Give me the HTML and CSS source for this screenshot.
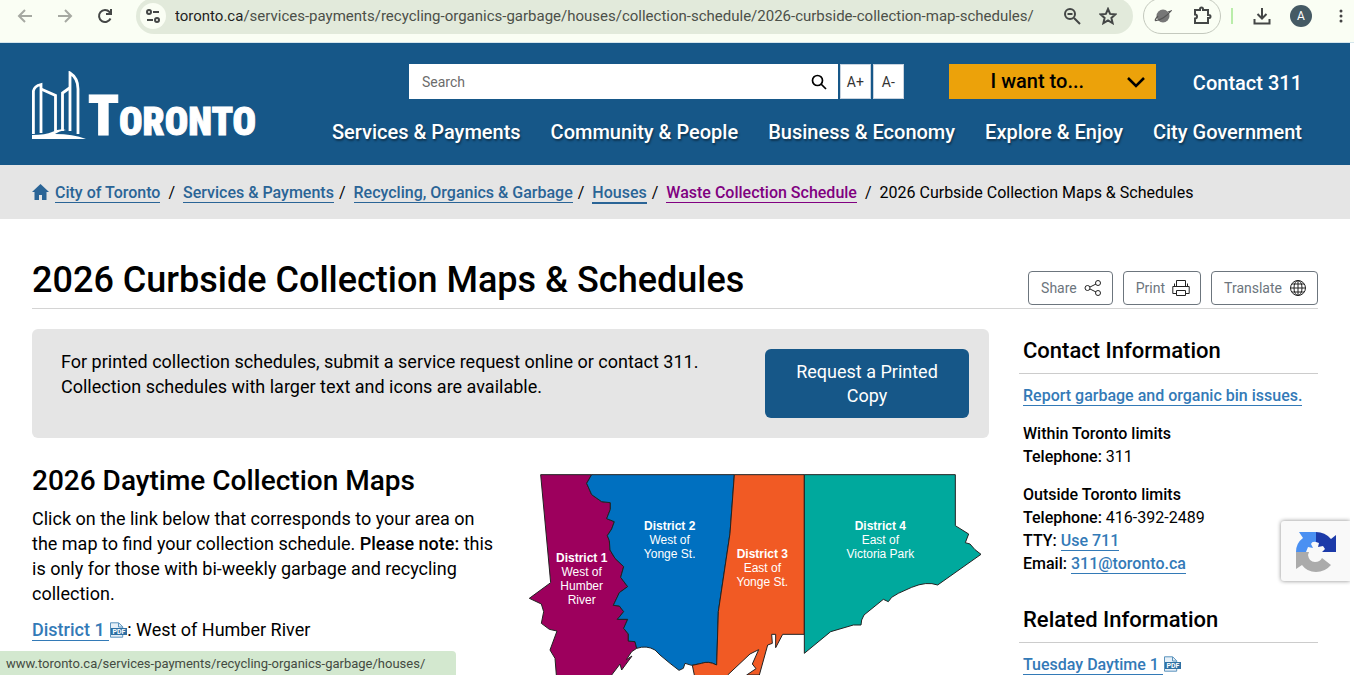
FILE: index.html
```
<!DOCTYPE html>
<html lang="en">
<head>
  <meta charset="UTF-8">
  <meta name="viewport" content="width=device-width, initial-scale=1">
  <title>2026 Curbside Collection Maps &amp; Schedules</title>
  <link rel="stylesheet" href="styles.css">
</head>
<body>
  <div class="browser-bar">
    <button class="bar-btn dim" aria-label="Back"><svg width="16" height="16" viewBox="0 0 16 16"><path d="M15 8H2M8 2L2 8l6 6"/></svg></button>
    <button class="bar-btn dim" aria-label="Forward"><svg width="16" height="16" viewBox="0 0 16 16"><path d="M1 8h13M8 2l6 6-6 6"/></svg></button>
    <button class="bar-btn" aria-label="Reload"><svg width="16" height="16" viewBox="0 0 16 16"><path d="M13.500 10.500A6 6 0 1 1 12.500 4L14 5.500M14 1v5H9"/></svg></button>
    <div class="address">
      <button class="site-info" aria-label="Site information"><svg width="16" height="16" viewBox="0 0 16 16"><circle cx="4" cy="4" r="2"/><path d="M8 4h6M2 12h6"/><circle cx="12" cy="12" r="2"/></svg></button>
      <span class="url"><b>toronto.ca</b>/services-payments/recycling-organics-garbage/houses/collection-schedule/2026-curbside-collection-map-schedules/</span>
      <button class="bar-btn" aria-label="Zoom"><svg width="18" height="18" viewBox="0 0 18 18"><circle cx="7" cy="7" r="5"/><path d="M11 11l6 6M4.500 7h5"/></svg></button>
      <button class="bar-btn" aria-label="Bookmark"><svg width="18" height="18" viewBox="0 0 18 18"><path d="M9 2l2.100 4.900 5.300.5-4 3.500 1.200 5.200L9 13.300l-4.600 2.800 1.200-5.200-4-3.500 5.300-.5z"/></svg></button>
    </div>
    <div class="extensions">
      <button class="bar-btn" aria-label="Extension"><svg width="18" height="18" viewBox="0 0 18 18"><circle cx="9" cy="9" r="6.500" fill="#777" stroke="none"/><path d="M1 13.500Q2 11 4 9M1 13.500C6 14 13 9 17 4L14 5" stroke="#555" stroke-width="1.200"/></svg></button>
      <button class="bar-btn" aria-label="Extensions"><svg width="20" height="20" viewBox="0 0 20 20"><path d="M3 4h5V3a1.500 1.500 0 0 1 3 0v1h5v5h1a1.500 1.500 0 0 1 0 3h-1v5H3v-4.500a2 2 0 0 0 0-4z"/></svg></button>
    </div>
    <span class="bar-divider"></span>
    <button class="bar-btn" aria-label="Downloads"><svg width="18" height="18" viewBox="0 0 18 18"><path d="M9 1v10M4.500 7L9 11.500 13.500 7M1.500 12v4.500h15V12"/></svg></button>
    <button class="avatar">A</button>
    <button class="bar-btn menu" aria-label="Menu"><svg width="4" height="16" viewBox="0 0 4 16"><g fill="#444" stroke="none"><circle cx="2" cy="3" r="1.500"/><circle cx="2" cy="8" r="1.500"/><circle cx="2" cy="13" r="1.500"/></g></svg></button>
  </div>

  <div class="page">
    <header class="header">
      <a class="logo" href="#" aria-label="Toronto">
        <svg width="54" height="69" viewBox="0 0 54 69">
          <g fill="none" stroke="#fff" stroke-width="2.800">
            <path d="M1.400 63V20q1-5 7.600-6.500V62"/>
            <path d="M9 18l14.500 6.500V60"/>
            <path d="M30.500 60V22l7-5"/>
            <path d="M38 60V2q8 5 8 16v45"/>
          </g>
          <path d="M0 64q14 0 20-3 8-4 14-2-7 1-11 4 18 0 31 5H0z" fill="#fff"/>
        </svg>
        <span class="wordmark">T<span>ORONTO</span></span>
      </a>
      <div class="header-main">
        <div class="tools">
          <form class="search">
            <input type="text" placeholder="Search" aria-label="Search">
            <button type="button" aria-label="Submit search"><svg width="16" height="16" viewBox="0 0 16 16"><circle cx="6.500" cy="6.500" r="5"/><path d="M10 10l5 5"/></svg></button>
          </form>
          <button class="text-size">A+</button>
          <button class="text-size">A-</button>
          <button class="want"><span>I want to...</span><svg width="20" height="12" viewBox="0 0 20 12"><path d="M2 2l8 8 8-8"/></svg></button>
          <a class="contact" href="#">Contact 311</a>
        </div>
        <nav class="nav">
          <a href="#">Services &amp; Payments</a>
          <a href="#">Community &amp; People</a>
          <a href="#">Business &amp; Economy</a>
          <a href="#">Explore &amp; Enjoy</a>
          <a href="#">City Government</a>
        </nav>
      </div>
    </header>

    <nav class="breadcrumb" aria-label="Breadcrumb">
      <svg class="home" width="17" height="16" viewBox="0 0 17 16"><path d="M8.500 0L17 8h-2.500v8H10v-5H7v5H2.500V8H0z"/></svg>
      <a href="#">City of Toronto</a><i>/</i>
      <a href="#">Services &amp; Payments</a><i class="tight">/</i>
      <a href="#">Recycling, Organics &amp; Garbage</a><i class="tight">/</i>
      <a class="hovered" href="#">Houses</a><i class="tight">/</i>
      <a class="visited" href="#">Waste Collection Schedule</a><i>/</i>
      <span>2026 Curbside Collection Maps &amp; Schedules</span>
    </nav>

    <main class="main">
      <div class="title-row">
        <h1>2026 Curbside Collection Maps &amp; Schedules</h1>
        <div class="page-tools">
          <button>Share <svg width="18" height="18" viewBox="0 0 18 18"><circle cx="3.500" cy="9" r="2.500"/><circle cx="14" cy="4" r="2.500"/><circle cx="14" cy="14" r="2.500"/><path d="M6 8l6-3M6 10l6 3"/></svg></button>
          <button>Print <svg width="18" height="18" viewBox="0 0 18 18"><path d="M4.500 8V1.500h9V8M2.500 4.500v3M15.500 4.500v3M4 14.500H.8V7.500h16.400v7H14M4.500 11.500h9v5h-9z"/></svg></button>
          <button>Translate <svg width="18" height="18" viewBox="0 0 18 18"><circle cx="9" cy="9" r="7.500"/><ellipse cx="9" cy="9" rx="4" ry="7.500"/><path d="M9 1.500v15M1.500 9h15M3 5h12M3 13h12"/></svg></button>
        </div>
      </div>

      <div class="columns">
        <div class="content">
          <div class="notice">
            <p>For printed collection schedules, submit a service request online or contact 311. Collection schedules with larger text and icons are available.</p>
            <button>Request a Printed Copy</button>
          </div>
          <div class="maps">
            <div>
              <h2>2026 Daytime Collection Maps</h2>
              <p>Click on the link below that corresponds to your area on the map to find your collection schedule. <b>Please note:</b> this is only for those with bi-weekly garbage and recycling collection.</p>
              <p><a class="link" href="#">District 1 </a><svg class="pdf" width="18" height="16" viewBox="0 0 18 16"><path d="M1.500 .8h8.200l4 4v10.400H1.500z" fill="#e6f0f8" stroke="#5b93bd"/><path d="M9.500 1v4h4" fill="none" stroke="#5b93bd"/><rect x="2" y="6" width="16" height="7" fill="#2f70a3"/><text x="10" y="12" text-anchor="middle">PDF</text></svg>: West of Humber River</p>
            </div>
            <svg class="map" width="455" height="240" viewBox="84 42 1365 720" role="img" aria-label="Collection districts">
              <g stroke="#222" stroke-width="3">
                <path fill="#9d005d" d="M122 44H275L260 70 275 104 305 125 331 128V148L320 176 343 185 335 207 322 227 328 242 330 270 345 295 371 320 362 352 383 380 358 398 340 436 358 438 371 455 352 478H383L371 505 385 522V543L405 545 410 565 395 575 379 599 396 588 365 630 360 612 335 645 325 762H165L169 645 165 595 150 570 171 513 148 508 124 490 131 455 124 432 88 415 152 368z"/>
                <path fill="#0070c0" d="M275 44H703L690 220 655 455 650 615Q625 602 605 610L575 616 555 610 550 625 537 631 510 610 480 585 465 570Q440 555 410 565L405 545 385 543V522L371 505 383 478H352L371 455 358 438 340 436 358 398 383 380 362 352 371 320 345 295 330 270 328 242 322 227 335 207 343 185 320 176 331 148V128L305 125 275 104 260 70z"/>
                <path fill="#f15a24" d="M703 44H913V523H848L827 563V523H815L817 550 803 555 778 645 740 645 768 626 757 612 776 569 750 582 683 645 640 720 583 645 577 616 605 610Q625 602 650 615L655 455 690 220z"/>
                <path fill="#00a99d" d="M913 44H1366V197L1406 222 1396 248 1410 252 1425 269 1443 283 1313 375Q1280 363 1235 382L1195 400 1175 412 1165 425 1150 418 1092 465 1085 480 1083 495 1060 495 992 515 913 580z"/>
              </g>
              <g class="map-labels">
                <text x="245" y="306"><tspan class="name">District 1</tspan><tspan x="245" dy="42">West of</tspan><tspan x="245" dy="42">Humber</tspan><tspan x="245" dy="42">River</tspan></text>
                <text x="509" y="210"><tspan class="name">District 2</tspan><tspan x="509" dy="42">West of</tspan><tspan x="509" dy="42">Yonge St.</tspan></text>
                <text x="787" y="294"><tspan class="name">District 3</tspan><tspan x="787" dy="42">East of</tspan><tspan x="787" dy="42">Yonge St.</tspan></text>
                <text x="1141" y="210"><tspan class="name">District 4</tspan><tspan x="1141" dy="42">East of</tspan><tspan x="1141" dy="42">Victoria Park</tspan></text>
              </g>
            </svg>
          </div>
        </div>

        <aside class="sidebar">
          <h3>Contact Information</h3>
          <p><a class="link" href="#">Report garbage and organic bin issues.</a></p>
          <p><b>Within Toronto limits</b><br><b>Telephone:</b> 311</p>
          <p><b>Outside Toronto limits</b><br><b>Telephone:</b> 416-392-2489<br><b>TTY:</b> <a class="link" href="#">Use 711</a><br><b>Email:</b> <a class="link" href="#">311@toronto.ca</a></p>
          <h3>Related Information</h3>
          <p><a class="link" href="#">Tuesday Daytime 1 </a><svg class="pdf" width="18" height="16" viewBox="0 0 18 16"><path d="M1.500 .8h8.200l4 4v10.400H1.500z" fill="#e6f0f8" stroke="#5b93bd"/><path d="M9.500 1v4h4" fill="none" stroke="#5b93bd"/><rect x="2" y="6" width="16" height="7" fill="#2f70a3"/><text x="10" y="12" text-anchor="middle">PDF</text></svg></p>
        </aside>
      </div>
    </main>

    <div class="captcha">
      <svg width="40" height="40" viewBox="0 0 40 40">
        <path fill="#4a90f2" d="M20 0v10q-4-1-5 2l2 4-5-1-2 5H0Q0 11 7 6L3 0h12z"/>
        <path fill="#1c3aa9" d="M20 0q9 0 15 7l5-4v17H26l3-3-2-3-5 1 1-4-3-1z"/>
        <path fill="#ababab" d="M0 20h13l-1 3q1 7 7 7 5 0 7-4l9 7q-6 7-15 7-9 0-14-7l-6 4z"/>
      </svg>
    </div>
  </div>

  <div class="status">www.toronto.ca/services-payments/recycling-organics-garbage/houses/</div>
</body>
</html>
```
FILE: styles.css
```
* { box-sizing: border-box; }
body { margin: 0; height: 100vh; overflow: hidden; position: relative; background: #fff; color: #000; font-family: Roboto, "Liberation Sans", sans-serif; font-size: 18px; line-height: 25px; }
button { font-family: inherit; cursor: pointer; }
h1, h2, h3, p { margin: 0; }
b { font-weight: 500; }

/* browser toolbar */
.browser-bar { display: flex; align-items: center; height: 43px; padding: 0 11px 10px 17px; background: #fafef4; border-bottom: 1px solid #d5e6ec; }
.bar-btn { display: flex; flex: none; padding: 0; border: 0; background: none; }
.bar-btn svg, .site-info svg { fill: none; stroke: #444746; stroke-width: 2; }
.browser-bar > .bar-btn { margin-right: 23px; }
.browser-bar > .dim { margin-right: 24px; }
.browser-bar > .dim svg { stroke: #a6a9a2; }
.address { display: flex; align-items: center; gap: 18px; flex: 1; min-width: 0; height: 36px; margin-right: 10px; padding: 0 16px 0 4px; border-radius: 18px; background: #e2eadb; }
.site-info { display: flex; align-items: center; justify-content: center; flex: none; width: 26px; height: 26px; padding: 0; border: 0; border-radius: 50%; background: #fafef4; }
.url { flex: 1; min-width: 0; margin: 0 -9px; overflow: hidden; white-space: nowrap; font-size: 15px; color: #4c5049; }
.url b { font-weight: 400; color: #1f1f1f; }
.extensions { display: flex; align-items: center; gap: 20px; height: 36px; padding: 0 8px 0 10px; border: 1px solid #c4c9be; border-radius: 18px; }
.bar-divider { width: 2px; height: 16px; margin: 0 20px 0 10px; background: #b9eda9; }
.browser-bar > .bar-divider + .bar-btn { margin-right: 19px; }
.avatar { flex: none; width: 22px; height: 22px; margin-right: 27px; padding: 0; border: 0; border-radius: 50%; background: #455a64; color: #fff; font-size: 12px; }
.browser-bar > .menu { margin-right: 0; }

.page { position: relative; margin-right: 4px; }

/* site header */
.header { display: flex; gap: 78px; height: 122px; padding: 21px 48px 0 32px; background: #165788; }
.logo { display: flex; align-items: flex-end; gap: 2px; flex: none; width: 222px; height: 76px; color: #fff; text-decoration: none; }
.logo svg { flex: none; }
.wordmark { font-family: "Roboto Condensed", "Liberation Sans Narrow", "Liberation Sans", sans-serif; font-size: 56px; line-height: 36px; font-weight: 900; -webkit-text-stroke: 1px #fff; }
.wordmark span { font-size: 39px; }
.header-main { flex: 1; min-width: 0; }
.tools { display: flex; align-items: center; padding-left: 77px; height: 35px; }
.search { display: flex; flex: 1; height: 35px; background: #fff; }
.search input { flex: 1; min-width: 0; padding: 0 13px; border: 0; background: none; font-family: inherit; font-size: 14px; }
.search input::placeholder { color: #6c6c6c; }
.search button { display: flex; align-items: center; padding: 0 11px; border: 0; background: none; }
.search svg { fill: none; stroke: #000; stroke-width: 1.7; }
.text-size { width: 31px; height: 35px; margin-left: 2px; padding: 0; border: 1px solid #c8d3df; background: #fff; color: #333; font-size: 14px; }
.want { display: flex; align-items: center; width: 207px; height: 35px; margin: 0 37px 0 45px; padding: 0 10px 0 0; border: 0; background: #eca20a; color: #000; font-size: 20px; font-weight: 500; }
.want span { flex: 1; padding-bottom: 2px; }
.want svg { fill: none; stroke: #000; stroke-width: 2.5; }
.contact { padding-top: 4px; color: #fff; font-size: 20px; font-weight: 500; text-decoration: none; }
.nav { display: flex; justify-content: space-between; margin-top: 21px; }
.nav a { color: #fff; font-size: 20px; font-weight: 500; text-decoration: none; text-shadow: 1px 2px 2px rgba(0,0,0,0.4); white-space: nowrap; }

.breadcrumb { display: flex; align-items: center; height: 54px; padding: 0 32px; background: #e5e5e5; font-size: 16px; white-space: nowrap; }
.breadcrumb a { padding-top: 2px; color: #2a6496; font-weight: 500; text-decoration: none; border-bottom: 1px solid; line-height: 19px; }
.breadcrumb .hovered { border-bottom-width: 2px; }
.breadcrumb .visited { color: #800080; }
.breadcrumb i { margin: 0 8px; font-style: normal; }
.breadcrumb .tight { margin: 0 8px 0 5px; }
.home { margin-right: 6px; fill: #2a6496; }

/* page body */
.main { padding: 42px 32px 0; }
.title-row { display: flex; justify-content: space-between; align-items: flex-end; height: 48px; border-bottom: 1px solid #d4d4d4; }
h1 { font-size: 36px; line-height: 56px; font-weight: 500; }
.page-tools { display: flex; gap: 10px; padding-bottom: 3px; }
.page-tools button { display: flex; align-items: center; gap: 7px; height: 34px; padding: 0 10px 0 12px; border: 1px solid #6c757d; border-radius: 4px; background: #fff; color: #6c757d; font-size: 14px; }
.page-tools svg { fill: none; stroke: #222; stroke-width: 1; }
.columns { display: grid; grid-template-columns: minmax(0, 1fr) 299px; gap: 30px; padding-top: 20px; }
.notice { display: flex; justify-content: space-between; gap: 30px; height: 109px; padding: 20px 20px 20px 29px; border-radius: 6px; background: #e5e5e5; }
.notice button { flex: none; width: 204px; height: 69px; padding: 0 28px; border: 0; border-radius: 6px; background: #165788; color: #fff; font-size: 18px; line-height: 24px; }
.maps { display: grid; grid-template-columns: minmax(0, 1fr) 455px; gap: 34px; padding: 24px 6px 0 0; }
.maps p { margin-bottom: 11px; }
.maps h2 { margin-bottom: 7px; font-size: 28px; line-height: 37px; font-weight: 500; white-space: nowrap; }
.map { margin-top: 12px; }
.map-labels { fill: #fff; font-family: "Liberation Sans", sans-serif; font-size: 36px; text-anchor: middle; }
.name { font-weight: 700; }
.link { color: #337ab7; font-weight: 500; text-decoration: none; border-bottom: 1px solid; white-space: pre; }
.pdf { vertical-align: -2px; }
.pdf text { fill: #fff; font-size: 7px; font-weight: 700; }

.sidebar { font-size: 16px; line-height: 23px; }
.sidebar h3 { margin-bottom: 10px; padding: 0 4px; border-bottom: 1px solid #ccc; font-size: 22px; line-height: 44px; font-weight: 500; }
.sidebar p { margin-bottom: 15px; padding: 0 4px; }
.sidebar p + h3 { margin-top: 23px; }
.sidebar .link { line-height: 19px; }

/* overlays */
.captcha { position: absolute; right: 0; top: 478px; width: 69px; height: 60px; padding: 11px 0 0 15px; border-radius: 3px 0 0 3px; background: #f9f9f9; box-shadow: 0 0 4px #888; clip-path: inset(-6px 0 -6px -6px); }
.status { position: absolute; left: 0; bottom: 0; width: 456px; height: 24px; padding-left: 6px; border-radius: 0 4px 0 0; background: #d3e8cf; color: #444b42; font-size: 13px; line-height: 26px; white-space: nowrap; }
```
